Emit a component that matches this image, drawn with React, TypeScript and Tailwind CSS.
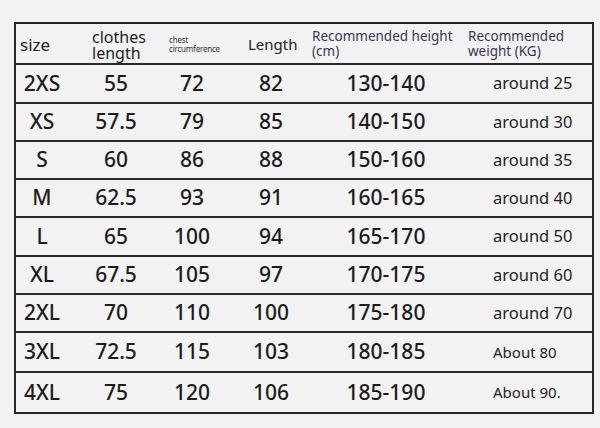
import React from "react";

const rows = [
  ["2XS", "55", "72", "82", "130-140", "around 25"],
  ["XS", "57.5", "79", "85", "140-150", "around 30"],
  ["S", "60", "86", "88", "150-160", "around 35"],
  ["M", "62.5", "93", "91", "160-165", "around 40"],
  ["L", "65", "100", "94", "165-170", "around 50"],
  ["XL", "67.5", "105", "97", "170-175", "around 60"],
  ["2XL", "70", "110", "100", "175-180", "around 70"],
  ["3XL", "72.5", "115", "103", "180-185", "About 80"],
  ["4XL", "75", "120", "106", "185-190", "About 90."],
];

const heights = ["h-[39px]", "h-[38px]", "h-[38px]", "h-[38px]", "h-[39px]", "h-[38px]", "h-[38px]", "h-[40px]", "h-[39px]"];

export default function App() {
  return (
    <div className="w-[600px] h-[428px] bg-[#f2f2f2] pt-[22px] pl-[14px] text-[#1c1c1c]" style={{ fontFamily: '"Noto Sans", "Open Sans", sans-serif' }}>
      <div className="w-[580px] border-2 border-[#262626] flex flex-col">
        <div className="h-[41px] flex border-b-2 border-[#2a2a2a] text-[#3a3650]">
          <div className="w-[76px] flex items-center pl-[4px] text-[17px] text-[#222] pt-[2px]">size</div>
          <div className="w-[77px] flex flex-col justify-center text-[16px] leading-[16px] text-[#222] pt-[3px]">
            <span>clothes</span>
            <span>length</span>
          </div>
          <div className="w-[79px] flex flex-col justify-center text-[8px] leading-[9px] text-[#333] tracking-[-0.2px]">
            <span>chest</span>
            <span>circumference</span>
          </div>
          <div className="w-[64px] flex items-center text-[15px] text-[#222] pt-[2px]">Length</div>
          <div className="w-[156px] flex flex-col justify-center text-[13.5px] leading-[15px]">
            <span>Recommended height</span>
            <span>(cm)</span>
          </div>
          <div className="flex-1 flex flex-col justify-center text-[13.5px] leading-[15px]">
            <span>Recommended</span>
            <span>weight (KG)</span>
          </div>
        </div>
        {rows.map((r, i) => (
          <div key={i} className={`${heights[i]} flex items-center ${i < rows.length - 1 ? "border-b-2 border-[#2a2a2a]" : ""}`}>
            <div className="w-[52px] text-center text-[21px] font-medium">{r[0]}</div>
            <div className="w-[96px] text-center text-[21px] font-medium">{r[1]}</div>
            <div className="w-[56px] text-center text-[21px] font-medium">{r[2]}</div>
            <div className="w-[102px] text-center text-[21px] font-medium">{r[3]}</div>
            <div className="w-[128px] text-center text-[21px] font-medium">{r[4]}</div>
            <div className={`flex-1 pl-[43px] ${i >= 7 ? "text-[15px]" : "text-[16.5px]"} text-[#222]`}>{r[5]}</div>
          </div>
        ))}
      </div>
    </div>
  );
}
